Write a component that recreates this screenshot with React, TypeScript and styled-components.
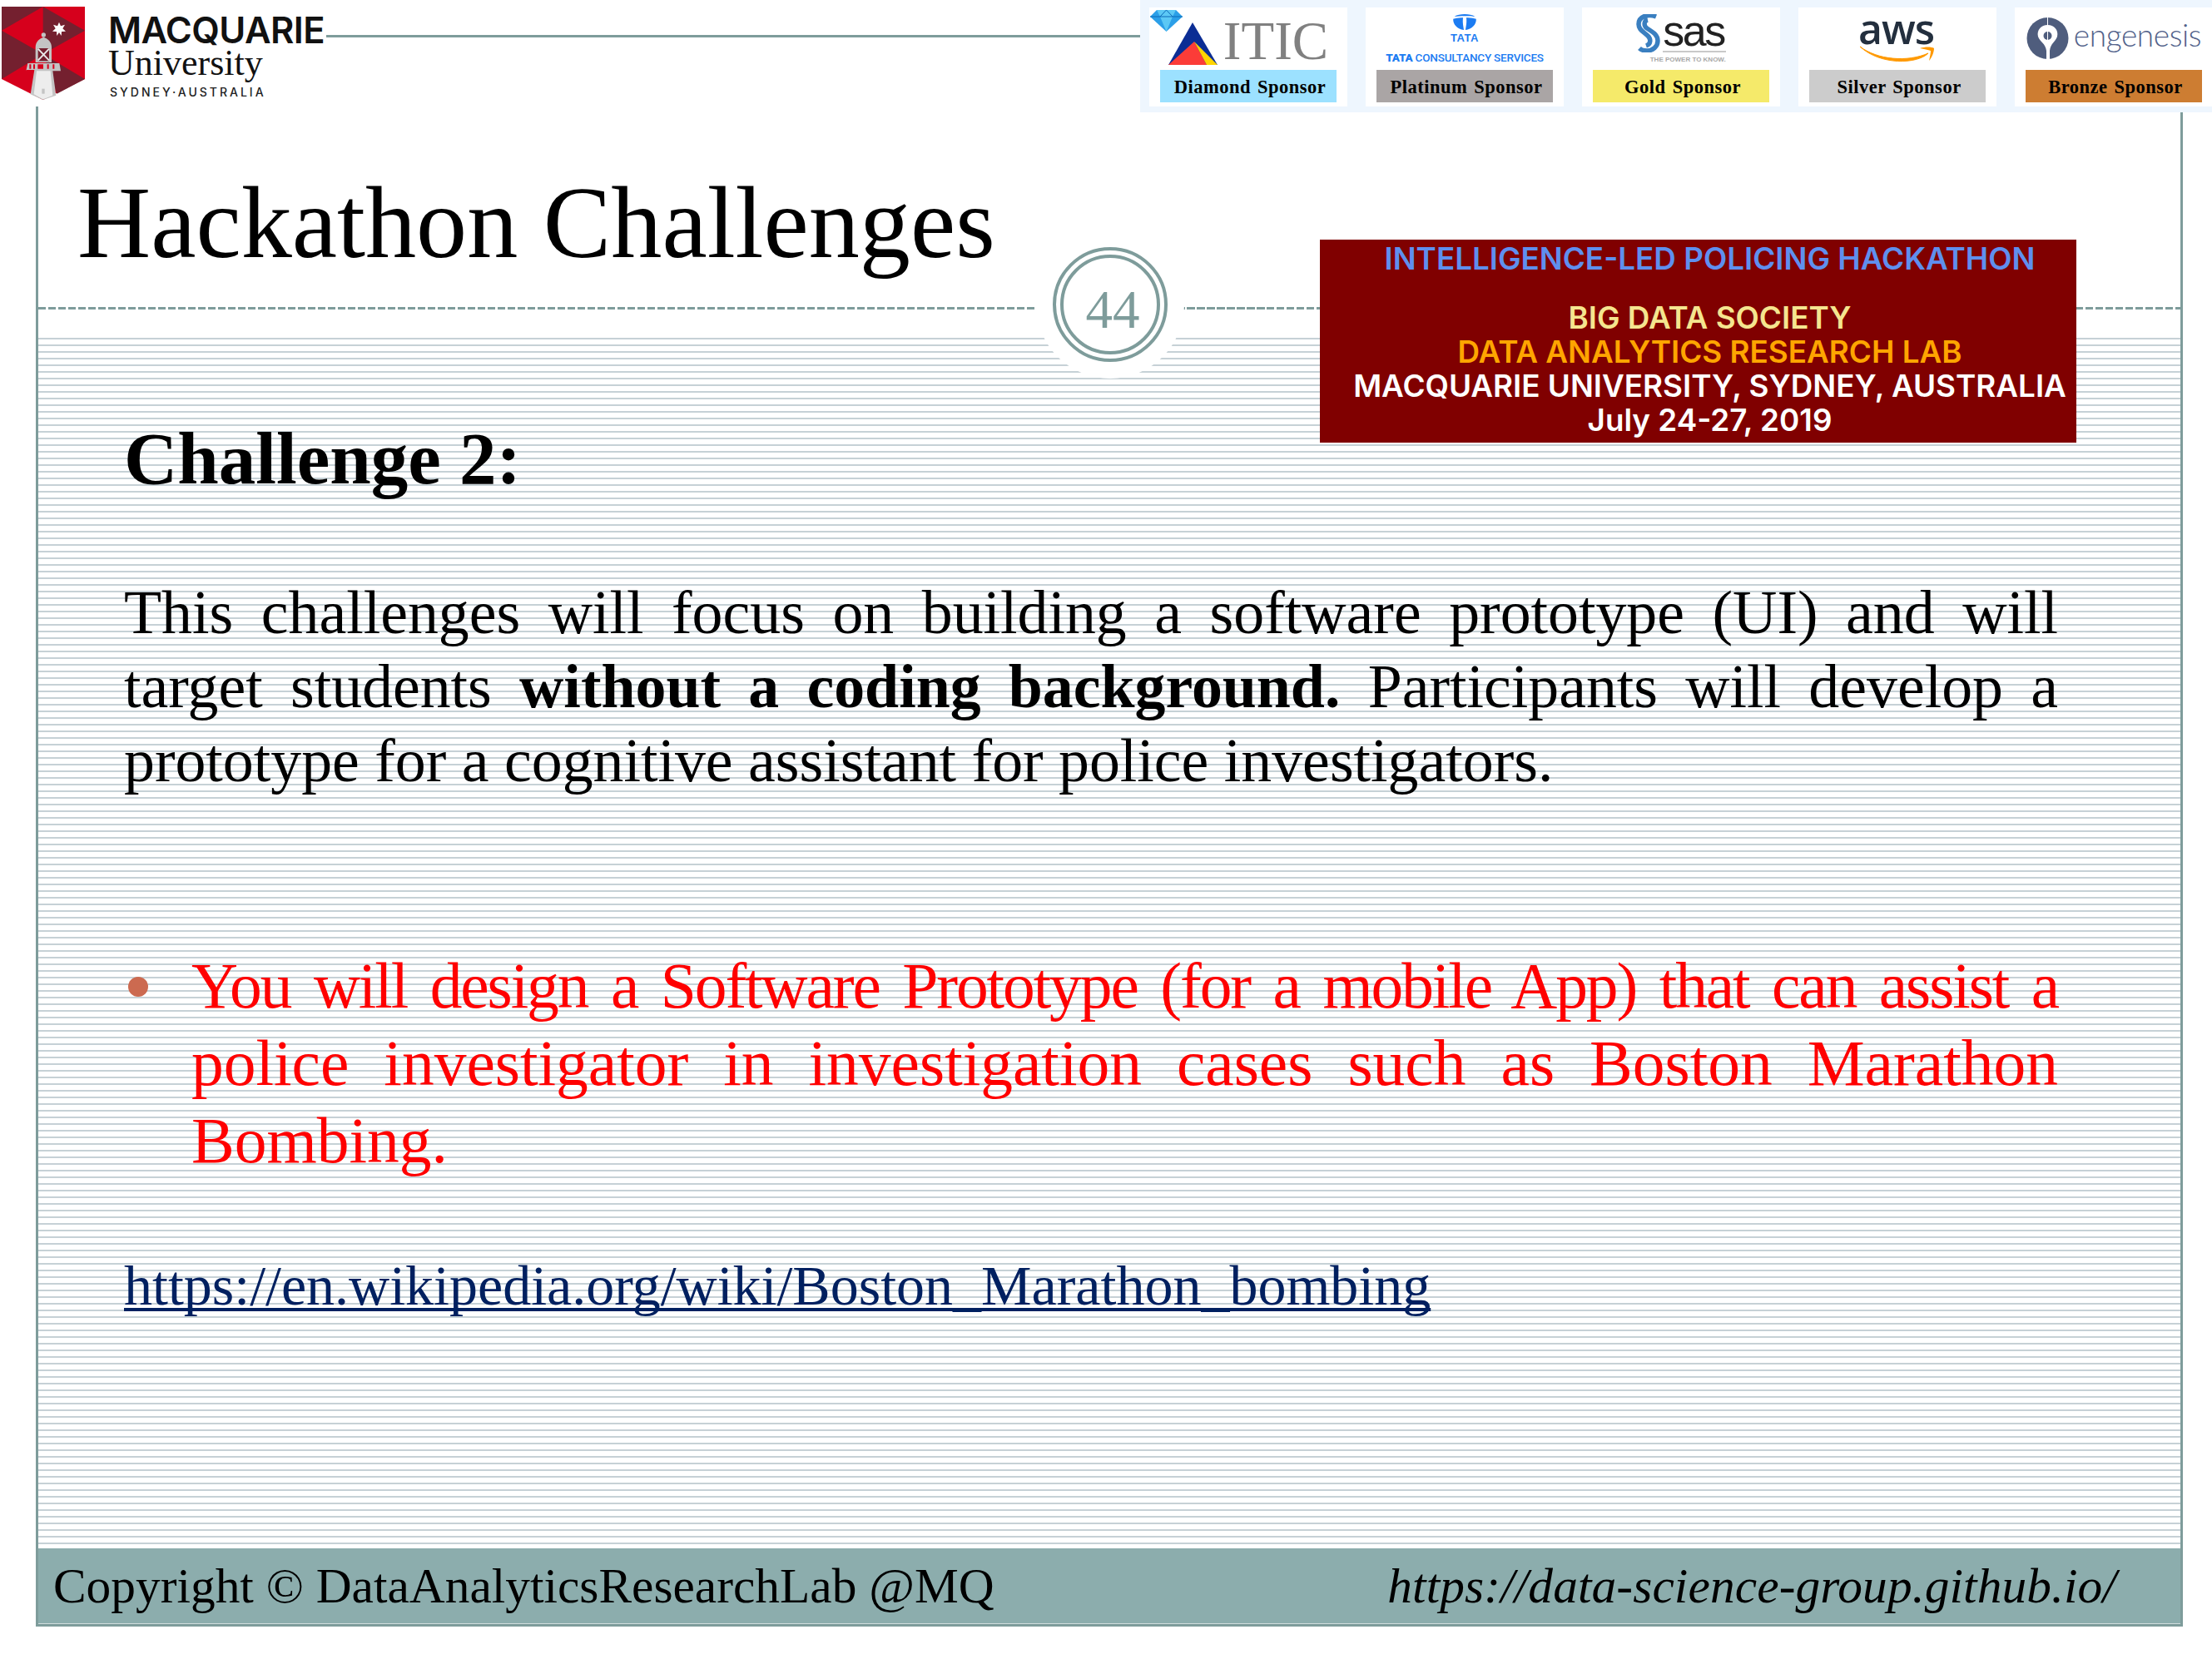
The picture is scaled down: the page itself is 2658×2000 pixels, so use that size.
import React from 'react';
import styled, { createGlobalStyle } from 'styled-components';

const TEAL = '#7e9c9b';

const GlobalStyle = createGlobalStyle`
  html, body {
    margin: 0;
    padding: 0;
    background: #fff;
  }
`;

const Slide = styled.div`
  width: 2658px;
  height: 2000px;
  overflow: hidden;
  background: #fff;
  font-family: 'Liberation Serif', 'Times New Roman', serif;
  color: #000;
`;

const Header = styled.header`
  display: flex;
  align-items: flex-start;
  height: 128px;
  position: relative;
  z-index: 2;
`;

const Crest = styled.svg`
  width: 103px;
  height: 123px;
  flex: none;
`;

const Wordmark = styled.div`
  display: flex;
  flex-direction: column;
  margin-left: 27px;
  padding-top: 14px;
  flex: none;
  width: 260px;
`;

const WordmarkName = styled.div`
  font-family: Inter, 'Liberation Sans', sans-serif;
  font-weight: 600;
  font-size: 43.500px;
  line-height: 44px;
  letter-spacing: -0.6px;
  white-space: nowrap;
  color: #111;
`;

const WordmarkUni = styled.div`
  font-family: 'Liberation Serif', serif;
  font-size: 44px;
  line-height: 36px;
  color: #111;
`;

const WordmarkPlace = styled.div`
  font-family: Inter, 'Liberation Sans', sans-serif;
  font-weight: 500;
  font-size: 14px;
  line-height: 18px;
  margin: 8px 0 0 2px;
  letter-spacing: 3px;
  color: #222;
  white-space: nowrap;
`;

const HeaderRule = styled.div`
  flex: 1;
  height: 3px;
  margin: 42px 0 0 2px;
  background: ${TEAL};
`;

const SponsorStrip = styled.div`
  flex: none;
  width: 1288px;
  height: 135px;
  box-sizing: border-box;
  padding: 9px 0 7px 11px;
  background: #eef6fe;
  display: flex;
  gap: 22px;
`;

const SponsorCard = styled.div`
  position: relative;
  width: 238px;
  flex: none;
  box-sizing: border-box;
  padding: 0 13px 5px;
  background: #fff;
  display: flex;
  flex-direction: column;
`;

const LogoArea = styled.div`
  flex: 1;
  min-height: 0;
  display: flex;
  align-items: center;
  justify-content: center;
`;

const SponsorLabel = styled.div<{ $bg: string }>`
  height: 39px;
  flex: none;
  box-sizing: border-box;
  padding: 2px 0 0 4px;
  display: flex;
  align-items: center;
  justify-content: center;
  background: ${(p) => p.$bg};
  font-weight: 700;
  font-size: 22.500px;
  letter-spacing: 0.5px;
  word-spacing: 2px;
  color: #000;
  white-space: nowrap;
`;

const Gem = styled.svg`
  position: absolute;
  left: 1px;
  top: 3px;
  width: 39px;
  height: 26px;
`;

const IticMark = styled.svg`
  margin-top: 12px;
`;

const IticText = styled.span`
  font-size: 65px;
  line-height: 60px;
  color: #808080;
  margin-left: 7px;
  margin-top: 5px;
`;

const TataStack = styled.div`
  display: flex;
  flex-direction: column;
  align-items: center;
  color: #1c7cf2;
  font-family: 'Liberation Sans', sans-serif;
`;

const TataMark = styled.div`
  font-weight: 700;
  font-size: 13px;
  line-height: 12px;
  margin-top: 4px;
  letter-spacing: 0.6px;
`;

const TataName = styled.div`
  font-family: Roboto, sans-serif;
  font-weight: 500;
  font-size: 13.500px;
  line-height: 14px;
  margin-top: 10px;
  white-space: nowrap;
  letter-spacing: -0.2px;

  b {
    font-weight: 900;
  }
`;

const SasStack = styled.div`
  display: flex;
  align-items: flex-start;
`;

const SasWords = styled.div`
  display: flex;
  flex-direction: column;
  align-items: flex-end;
`;

const SasName = styled.div`
  font-family: 'Liberation Sans', sans-serif;
  font-size: 52px;
  line-height: 40px;
  letter-spacing: -2.500px;
  color: #222;
  border-bottom: 2px solid #c9c9c9;
  padding: 0 2px 4px 0;
`;

const SasTag = styled.div`
  font-family: 'Liberation Sans', sans-serif;
  font-weight: 700;
  font-size: 8px;
  line-height: 10px;
  margin-top: 4px;
  margin-left: -24px;
  color: #a8a8a8;
  white-space: nowrap;
`;

const AwsStack = styled.div`
  display: flex;
  flex-direction: column;
  align-items: center;
  margin-left: -3px;
`;

const AwsName = styled.div`
  font-family: 'Open Sans', sans-serif;
  font-weight: 600;
  font-size: 50px;
  line-height: 32px;
  letter-spacing: -1px;
  color: #232f3e;
  margin-bottom: 5px;
`;

const EngenesisRow = styled.div`
  display: flex;
  align-items: center;
  gap: 6px;
  margin: -2px -10px 0;
`;

const EngenesisName = styled.div`
  font-family: Lato, sans-serif;
  font-weight: 300;
  font-size: 37px;
  line-height: 40px;
  letter-spacing: -0.400px;
  color: #52628a;
  margin-top: -8px;
`;

const Frame = styled.main`
  position: relative;
  margin-left: 43px;
  width: 2580px;
  height: 1827px;
  box-sizing: border-box;
  border-left: 3px solid ${TEAL};
  border-right: 3px solid ${TEAL};
  border-bottom: 3px solid ${TEAL};
  display: flex;
  flex-direction: column;
`;

const TitleArea = styled.div`
  height: 241px;
  flex: none;
  padding: 72px 0 0 47px;
  box-sizing: border-box;
`;

const Title = styled.h1`
  margin: 0;
  font-weight: 400;
  font-size: 122.200px;
  line-height: 136px;
  white-space: nowrap;
`;

const DashedRule = styled.div`
  height: 3px;
  flex: none;
  background: repeating-linear-gradient(to right, ${TEAL} 0 9.500px, transparent 9.500px 12px);
`;

const PageBadge = styled.div`
  position: absolute;
  left: 1199px;
  top: 149px;
  width: 178px;
  height: 178px;
  border-radius: 50%;
  background: #fff;
  display: flex;
  align-items: center;
  justify-content: center;
`;

const PageRingOuter = styled.div`
  width: 138px;
  height: 138px;
  box-sizing: border-box;
  border: 4px solid ${TEAL};
  border-radius: 50%;
  display: flex;
  align-items: center;
  justify-content: center;
`;

const PageRingInner = styled.div`
  width: 120px;
  height: 120px;
  box-sizing: border-box;
  border: 4px solid ${TEAL};
  border-radius: 50%;
  display: flex;
  align-items: center;
  justify-content: center;
  color: ${TEAL};
  font-size: 65px;
  padding: 13px 0 0 6px;
`;

const EventBanner = styled.aside`
  position: absolute;
  left: 1540px;
  top: 160px;
  width: 909px;
  height: 244px;
  box-sizing: border-box;
  padding: 2px 0 0 28px;
  background: #800000;
  font-family: Inter, 'Liberation Sans', sans-serif;
  font-weight: 600;
  font-size: 36.800px;
  line-height: 41px;
  text-align: center;
  white-space: nowrap;
`;

const BannerLine = styled.div<{ $color: string; $gap?: number }>`
  color: ${(p) => p.$color};
  margin-top: ${(p) => p.$gap ?? 0}px;
`;

const Body = styled.section`
  flex: 1;
  min-height: 0;
  box-sizing: border-box;
  padding: 130px 147px 0 103px;
  background-color: #fff;
  background-image: repeating-linear-gradient(to bottom, #c6d1d6 0 2px, transparent 2px 8px);
  background-position: 0 34px;
  background-repeat: no-repeat;
`;

const ChallengeHeading = styled.h2`
  margin: 0;
  font-weight: 700;
  font-size: 89px;
  line-height: 98px;
`;

const Paragraph = styled.p`
  margin: 92px 0 0;
  font-size: 73.800px;
  line-height: 89px;
  text-align: justify;
  color: #000;
`;

const BulletList = styled.ul`
  list-style: none;
  margin: 180px 0 0;
  padding: 0;
`;

const BulletItem = styled.li`
  position: relative;
  padding-left: 81px;
  font-size: 77.500px;
  line-height: 93px;
  text-align: justify;
  color: #ff0000;

  &::before {
    content: '';
    position: absolute;
    left: 5px;
    top: 35px;
    width: 24px;
    height: 24px;
    border-radius: 50%;
    background: #cc6a50;
  }
`;

const TightLine = styled.span`
  letter-spacing: -2.100px;
`;

const WikiLink = styled.a`
  display: block;
  margin-top: 89px;
  font-size: 68px;
  line-height: 76px;
  color: #002060;
  text-decoration: underline;
  text-decoration-thickness: 4px;
  text-decoration-skip-ink: none;
  text-underline-offset: 4px;
  white-space: nowrap;
`;

const Footer = styled.footer`
  height: 91px;
  flex: none;
  box-sizing: border-box;
  border-bottom: 1px solid #d0dddd;
  background: #8cadad;
  display: flex;
  align-items: center;
  justify-content: space-between;
  padding: 0 77px 0 18px;
  font-size: 59.400px;
  white-space: nowrap;
`;

const FooterUrl = styled.span`
  font-style: italic;
  letter-spacing: 0.1px;
`;

const MacquarieCrest = () => (
  <Crest viewBox="0 0 309 369">
    <path d="M6 24H306V285L155 360 6 285Z" fill="#d6001c" />
    <path d="M6 24H155L6 110Z" fill="#74202f" />
    <path d="M155 24L306 110 155 195Z" fill="#74202f" />
    <path d="M6 110L155 195 6 285Z" fill="#74202f" />
    <path d="M155 195L306 285 205 338Z" fill="#74202f" />
    <path d="M213 80l6 14 15-5-8 14 11 10-15 1-1 15-8-12-8 12-1-15-15-1 11-10-8-14 15 5z" fill="#fff" />
    <path d="M110 340L124 252H94V256L100 228H214L219 256H190L202 344 155 360Z" fill="#c4c4c4" />
    <path d="M128 225V170C128 150 143 138 157 134 171 138 186 150 186 170V225Z" fill="#c4c4c4" />
    <circle cx="157" cy="126" r="8" fill="#c4c4c4" />
    <rect x="137" y="174" width="40" height="46" fill="#74202f" />
    <path d="M137 176L177 218M177 176L137 218" stroke="#e8e8e8" strokeWidth="6" />
    <path d="M132 256H182L190 344 155 358 122 340Z" fill="#fff" opacity="0.7" />
    <path d="M106 232h6v16h-6zM120 232h6v16h-6zM136 232h20v16h-20zM170 232h6v16h-6zM190 232h6v16h-6z" fill="#d6001c" />
    <rect x="151" y="320" width="10" height="18" fill="#c4c4c4" />
  </Crest>
);

const IticLogo = () => (
  <>
    <Gem viewBox="0 0 39 26">
      <path d="M8 0H31L39 8 19.500 26 0 8Z" fill="#2b9fe8" />
      <path d="M8 0L12 8 19.500 26 27 8 31 0Z" fill="#5cc8f5" />
      <path d="M0 8H39M12 8L19.500 0 27 8" stroke="#0d6ab8" strokeWidth="1" fill="none" />
    </Gem>
    <IticMark width="59" height="51" viewBox="0 0 59 51">
      <path d="M29 0L59 51H0Z" fill="#0b2d94" />
      <path d="M31 23L46 51H0Z" fill="#fb3c38" />
      <path d="M31 23L59 51H46Z" fill="#ffd400" />
    </IticMark>
    <IticText>ITIC</IticText>
  </>
);

const TataLogo = () => (
  <TataStack>
    <svg width="30" height="19" viewBox="0 0 30 20">
      <path d="M2 3C8-1 22-1 28 3 24 2 7 2 2 3Z" fill="#1c7cf2" />
      <path d="M0.500 6C4 5 9 4 13 4.500 12 10 13.500 16 14 20 6 19 0 13 0.500 6Z" fill="#1c7cf2" />
      <path d="M29.500 6C26 5 21 4 17 4.500 18 10 16.500 16 16 20 24 19 30 13 29.500 6Z" fill="#1c7cf2" />
    </svg>
    <TataMark>TATA</TataMark>
    <TataName>
      <b>TATA</b> CONSULTANCY SERVICES
    </TataName>
  </TataStack>
);

const SasLogo = () => (
  <SasStack>
    <svg width="32" height="46" viewBox="0 0 32 46">
      <path
        d="M24 3C14-1 3 3 3 12 3 19 9 21 14 26 18 30 18 36 12 38M14 7C9 8 9 14 13 17 19 21 26 24 26 32 26 39 20 44 13 44 9 44 6 43 4 41"
        fill="none"
        stroke="#3a7fc0"
        strokeWidth="5.500"
      />
    </svg>
    <SasWords>
      <SasName>sas</SasName>
      <SasTag>THE POWER TO KNOW.</SasTag>
    </SasWords>
  </SasStack>
);

const AwsLogo = () => (
  <AwsStack>
    <AwsName>aws</AwsName>
    <svg width="90" height="21" viewBox="0 0 90 21">
      <path d="M1 1C22 17 58 20 83 9 70 22 26 24 1 1Z" fill="#ff9900" stroke="#ff9900" strokeWidth="1" />
      <path d="M73 3C79 1 87 1 90 3 90 8 87 15 84 18 85 13 86 9 86 6 83 5 78 4 73 3Z" fill="#ff9900" />
    </svg>
  </AwsStack>
);

const EngenesisLogo = () => (
  <EngenesisRow>
    <svg width="51" height="50" viewBox="0 0 51 50">
      <circle cx="25.500" cy="25" r="25" fill="#4f5d7d" />
      <path d="M25.500 9C33 9 39 15 37 23 35 29 29 31 28 40V50H24V40C23 31 16 29 14 23 12 15 18 9 25.500 9Z" fill="#fff" />
      <circle cx="25.500" cy="22" r="5" fill="#4f5d7d" />
      <rect x="25" y="0" width="1" height="50" fill="#fff" />
    </svg>
    <EngenesisName>engenesis</EngenesisName>
  </EngenesisRow>
);

const sponsors = [
  { label: 'Diamond Sponsor', bg: '#9ce1ff', Logo: IticLogo },
  { label: 'Platinum Sponsor', bg: '#aaa5a5', Logo: TataLogo },
  { label: 'Gold Sponsor', bg: '#f5ea6a', Logo: SasLogo },
  { label: 'Silver Sponsor', bg: '#cccccc', Logo: AwsLogo },
  { label: 'Bronze Sponsor', bg: '#cd7d32', Logo: EngenesisLogo },
];

const App = (): JSX.Element => {
  return (
    <Slide>
      <GlobalStyle />
      <Header>
        <MacquarieCrest />
        <Wordmark>
          <WordmarkName>MACQUARIE</WordmarkName>
          <WordmarkUni>University</WordmarkUni>
          <WordmarkPlace>SYDNEY·AUSTRALIA</WordmarkPlace>
        </Wordmark>
        <HeaderRule />
        <SponsorStrip>
          {sponsors.map(({ label, bg, Logo }) => (
            <SponsorCard key={label}>
              <LogoArea>
                <Logo />
              </LogoArea>
              <SponsorLabel $bg={bg}>{label}</SponsorLabel>
            </SponsorCard>
          ))}
        </SponsorStrip>
      </Header>
      <Frame>
        <TitleArea>
          <Title>Hackathon Challenges</Title>
        </TitleArea>
        <DashedRule />
        <Body>
          <ChallengeHeading>Challenge 2:</ChallengeHeading>
          <Paragraph>
            This challenges will focus on building a software prototype (UI) and will target students{' '}
            <strong>without a coding background.</strong> Participants will develop a prototype for a
            cognitive assistant for police investigators.
          </Paragraph>
          <BulletList>
            <BulletItem>
              <TightLine>You will design a Software Prototype (for a mobile App) that can assist a</TightLine> police
              investigator in investigation cases such as Boston Marathon Bombing.
            </BulletItem>
          </BulletList>
          <WikiLink href="#">https://en.wikipedia.org/wiki/Boston_Marathon_bombing</WikiLink>
        </Body>
        <Footer>
          <span>Copyright © DataAnalyticsResearchLab @MQ</span>
          <FooterUrl>https://data-science-group.github.io/</FooterUrl>
        </Footer>
        <PageBadge>
          <PageRingOuter>
            <PageRingInner>44</PageRingInner>
          </PageRingOuter>
        </PageBadge>
        <EventBanner>
          <BannerLine $color="#5f8fee">INTELLIGENCE-LED POLICING HACKATHON</BannerLine>
          <BannerLine $color="#f5e58f" $gap={30}>BIG DATA SOCIETY</BannerLine>
          <BannerLine $color="#ffa500">DATA ANALYTICS RESEARCH LAB</BannerLine>
          <BannerLine $color="#ffffff">MACQUARIE UNIVERSITY, SYDNEY, AUSTRALIA</BannerLine>
          <BannerLine $color="#ffffff">July 24-27, 2019</BannerLine>
        </EventBanner>
      </Frame>
    </Slide>
  );
};

export default App;
